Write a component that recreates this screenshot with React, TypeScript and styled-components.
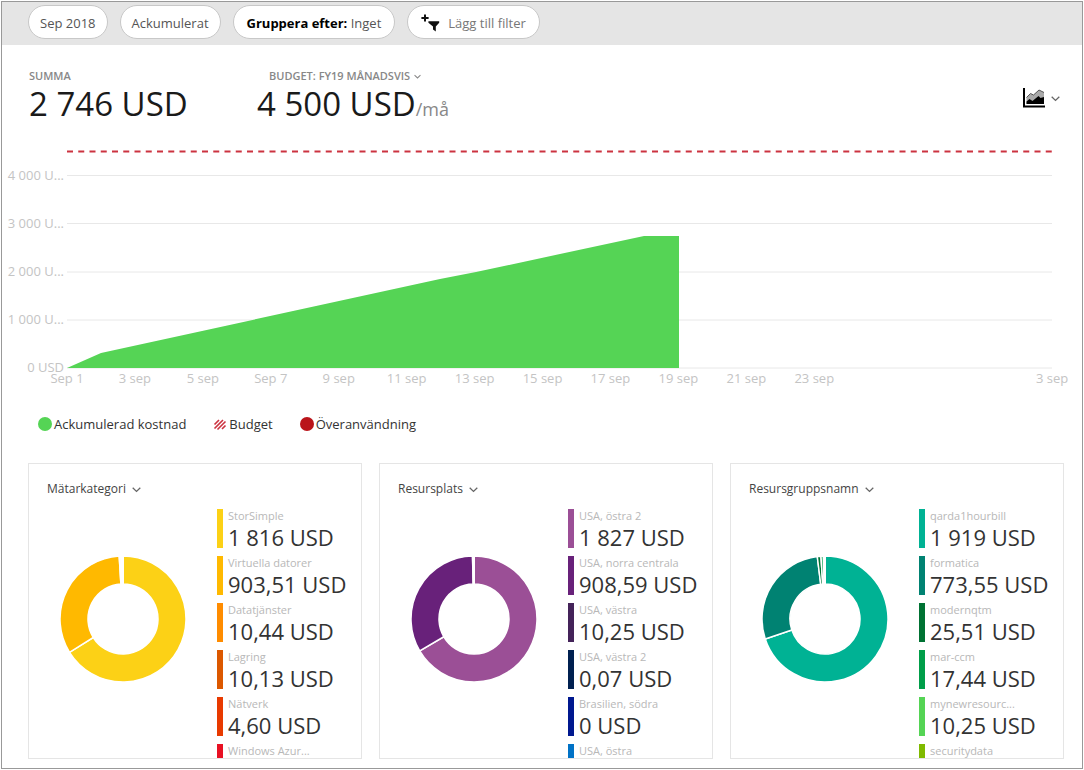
import React from "react";
import styled, { createGlobalStyle } from "styled-components";

const Global = createGlobalStyle`
  *, *::before, *::after { box-sizing: border-box; }
  body { margin: 0; background: #fff; font-family: "Open Sans", "Noto Sans", sans-serif; color: #333; }
  button { font: inherit; color: inherit; cursor: pointer; }
`;

const Page = styled.main`
  margin: 1px;
  border: 1px solid #999;
  padding-bottom: 9px;
`;

const Toolbar = styled.div`
  display: flex;
  gap: 12px;
  height: 43px;
  padding: 3px 26px 0;
  background: #e5e5e5;
`;

const Pill = styled.button<{ $muted?: boolean; $pad?: number }>`
  display: flex;
  align-items: center;
  height: 34px;
  padding: 2px ${(p) => p.$pad ?? 11}px 0;
  border: 1px solid #c8c8c8;
  border-radius: 17px;
  background: #fff;
  font-size: 13px;
  color: ${(p) => (p.$muted ? "#777" : "#555")};
  white-space: pre;
  svg { margin-right: 8px; }
  b { color: #000; }
`;

const Summary = styled.header`
  display: flex;
  height: 105px;
  padding: 24px 22px 0 27px;
`;

const Metric = styled.section`
  width: 228px;
  flex: none;
`;

const MetricLabel = styled.div<{ $indent?: boolean }>`
  display: flex;
  align-items: center;
  gap: 4px;
  padding-left: ${(p) => (p.$indent ? "12px" : "0")};
  font-size: 11px;
  line-height: 14px;
  font-weight: 600;
  color: #888;
`;

const PlainButton = styled.button`
  display: flex;
  align-items: center;
  gap: 4px;
  padding: 0;
  border: 0;
  background: none;
`;

const MetricValue = styled.div`
  font-size: 33px;
  line-height: 41px;
  color: #1a1a1a;
  white-space: nowrap;
  small { font-size: 18px; color: #888; }
`;

const ChartType = styled(PlainButton)`
  gap: 6px;
  height: 24px;
  margin: 17px 0 0 auto;
`;

const Chart = styled.section`
  display: grid;
  grid-template-columns: 62px 1fr;
  column-gap: 3px;
  padding-right: 30px;
`;

const YAxis = styled.div`
  display: grid;
  grid-auto-rows: 48px;
  padding-top: 16px;
  font-size: 13px;
  line-height: 18px;
  text-align: right;
  white-space: nowrap;
  color: #c4c4c4;
  height: 219px;
`;

const Plot = styled.svg`
  display: block;
  width: 100%;
  height: 219px;
`;

const XAxis = styled.div`
  grid-column: 2;
  display: grid;
  grid-template-columns: repeat(29, 1fr) 0;
  font-size: 13px;
  line-height: 18px;
  color: #c4c4c4;
`;

const Tick = styled.span<{ $day: number }>`
  grid-column: ${(p) => p.$day};
  grid-row: 1;
  display: flex;
  justify-content: center;
  width: 0;
  white-space: nowrap;
`;

const Legend = styled.ul`
  display: flex;
  gap: 27px;
  margin: 0;
  padding: 27px 36px 0;
  list-style: none;
  font-size: 13px;
  line-height: 20px;
  li { display: flex; align-items: center; gap: 2px; }
`;

const Cards = styled.div`
  display: grid;
  grid-template-columns: repeat(3, 1fr);
  gap: 17px;
  padding: 29px 18px 0 26px;
`;

const Card = styled.section`
  height: 296px;
  border: 1px solid #e5e5e5;
  overflow: hidden;
  padding: 16px 0 0 18px;
`;

const CardTitle = styled(PlainButton)`
  gap: 6px;
  font-size: 12px;
  line-height: 18px;
  color: #444;
`;

const CardBody = styled.div`
  display: flex;
  justify-content: space-between;
  padding: 11px 11px 0 13px;
`;

const Donut = styled.svg`
  width: 126px;
  height: 126px;
  margin-top: 47px;
  flex: none;
`;

const Items = styled.ul`
  width: 133px;
  margin: 0;
  padding: 0;
  list-style: none;
`;

const Item = styled.li<{ $color: string }>`
  height: 39px;
  margin-bottom: 8px;
  padding-left: 5px;
  border-left: 6px solid ${(p) => p.$color};
  white-space: nowrap;
`;

const ItemName = styled.div`
  font-size: 11px;
  line-height: 14px;
  color: #b8b8b8;
`;

const ItemValue = styled.div`
  font-size: 22px;
  line-height: 28px;
  color: #333;
`;

const Chevron = ({ size = 9, color = "#666" }: { size?: number; color?: string }) => (
  <svg width={size} height={size} viewBox="0 0 9 9" fill="none" stroke={color} strokeWidth="1.3">
    <path d="M0.7 2.8 4.5 6.4 8.3 2.8" />
  </svg>
);

const FilterIcon = () => (
  <svg width="19" height="18" viewBox="0 0 19 18" fill="#111">
    <path d="M3 0.5h2v2.5h2.6v2H5v2.6H3V5H0.4V3H3z" />
    <path d="M7.4 7.2h10.8v1.6l-3.4 3.6v5l-2.8-2v-3L7.4 8.800z" />
  </svg>
);

const AreaIcon = () => (
  <svg width="22" height="20" viewBox="0 0 22 20">
    <path d="M3.5 16V9.5l4-4 3 1.5 5.5-5 5 2.5V16z" fill="#aaa" />
    <path d="M3.5 9.5l4-4 3 1.5 5.5-5 5 2.5" fill="none" stroke="#555" />
    <path d="M3.5 16v-2.5l3-2.5 3 2 6-5 2 2 3.5-1V16z" fill="#000" />
    <path d="M1 0v18.5h21" fill="none" stroke="#000" strokeWidth="2" />
  </svg>
);

type Entry = { name: string; value?: string; amount: number; color: string };

const point = (r: number, share: number) => {
  const a = share * 2 * Math.PI;
  return `${63 + r * Math.sin(a)} ${63 - r * Math.cos(a)}`;
};

const slice = (from: number, to: number) => {
  const large = to - from > 0.5 ? 1 : 0;
  return `M${point(63, from)}A63 63 0 ${large} 1 ${point(63, to)}L${point(35, to)}A35 35 0 ${large} 0 ${point(35, from)}Z`;
};

const cards: { title: string; entries: Entry[] }[] = [
  {
    title: "Mätarkategori",
    entries: [
      { name: "StorSimple", value: "1 816 USD", amount: 1816, color: "#fcd116" },
      { name: "Virtuella datorer", value: "903,51 USD", amount: 903.51, color: "#ffb900" },
      { name: "Datatjänster", value: "10,44 USD", amount: 10.44, color: "#ff8c00" },
      { name: "Lagring", value: "10,13 USD", amount: 10.13, color: "#dc5800" },
      { name: "Nätverk", value: "4,60 USD", amount: 4.6, color: "#e83a00" },
      { name: "Windows Azur...", amount: 1.2, color: "#e81123" },
    ],
  },
  {
    title: "Resursplats",
    entries: [
      { name: "USA, östra 2", value: "1 827 USD", amount: 1827, color: "#9b4f96" },
      { name: "USA, norra centrala", value: "908,59 USD", amount: 908.59, color: "#68217a" },
      { name: "USA, västra", value: "10,25 USD", amount: 10.25, color: "#442359" },
      { name: "USA, västra 2", value: "0,07 USD", amount: 0.07, color: "#002050" },
      { name: "Brasilien, södra", value: "0 USD", amount: 0, color: "#00188f" },
      { name: "USA, östra", amount: 0, color: "#0072c6" },
    ],
  },
  {
    title: "Resursgruppsnamn",
    entries: [
      { name: "qarda1hourbill", value: "1 919 USD", amount: 1919, color: "#00b294" },
      { name: "formatica", value: "773,55 USD", amount: 773.55, color: "#008272" },
      { name: "modernqtm", value: "25,51 USD", amount: 25.51, color: "#007233" },
      { name: "mar-ccm", value: "17,44 USD", amount: 17.44, color: "#009e49" },
      { name: "mynewresourc...", value: "10,25 USD", amount: 10.25, color: "#55d455" },
      { name: "securitydata", amount: 0.5, color: "#7fba00" },
    ],
  },
];

const ticks: [number, string][] = [
  [1, "Sep 1"], [3, "3 sep"], [5, "5 sep"], [7, "Sep 7"], [9, "9 sep"], [11, "11 sep"],
  [13, "13 sep"], [15, "15 sep"], [17, "17 sep"], [19, "19 sep"], [21, "21 sep"], [23, "23 sep"], [30, "3 sep"],
];

const DonutChart = ({ entries }: { entries: Entry[] }) => {
  const total = entries.reduce((s, e) => s + e.amount, 0);
  let at = 0;
  return (
    <Donut viewBox="0 0 126 126">
      {entries.map((e) => {
        const from = at;
        at += e.amount / total;
        return e.amount > 0 ? (
          <path key={e.name} d={slice(from, at)} fill={e.color} stroke="#fff" strokeWidth="1.5" />
        ) : null;
      })}
      <path d="M63 0V28" stroke="#fff" strokeWidth="2" />
    </Donut>
  );
};

export default function App() {
  return (
    <>
      <Global />
      <Page>
        <Toolbar>
          <Pill>Sep 2018</Pill>
          <Pill>Ackumulerat</Pill>
          <Pill $pad={13}><b>Gruppera efter:</b> Inget</Pill>
          <Pill $pad={13} $muted><FilterIcon />Lägg till filter</Pill>
        </Toolbar>
        <Summary>
          <Metric>
            <MetricLabel>SUMMA</MetricLabel>
            <MetricValue>2 746 USD</MetricValue>
          </Metric>
          <Metric>
            <MetricLabel $indent>
              <PlainButton>BUDGET: FY19 MÅNADSVIS <Chevron size={7} color="#888" /></PlainButton>
            </MetricLabel>
            <MetricValue>4 500 USD<small>/må</small></MetricValue>
          </Metric>
          <ChartType aria-label="Diagramtyp"><AreaIcon /><Chevron /></ChartType>
        </Summary>
        <Chart>
          <YAxis>
            <span>4 000 U...</span>
            <span>3 000 U...</span>
            <span>2 000 U...</span>
            <span>1 000 U...</span>
            <span>0 USD</span>
          </YAxis>
          <Plot viewBox="0 0 985 219" preserveAspectRatio="none">
            <path d="M0 25.5H985M0 73.5H985M0 122H985M0 170H985M0 218H985" stroke="#e8e8e8" vectorEffect="non-scaling-stroke" />
            <path d="M0 218 34 203 373 129 409 122 577 86H612V218Z" fill="#55d455" />
            <path d="M0 1.5H985" stroke="#cc3340" strokeWidth="2" strokeDasharray="6 5.25" vectorEffect="non-scaling-stroke" />
          </Plot>
          <XAxis>
            {ticks.map(([day, label]) => <Tick key={day} $day={day}>{label}</Tick>)}
          </XAxis>
        </Chart>
        <Legend>
          <li><svg width="14" height="14"><circle cx="7" cy="7" r="7" fill="#55d455" /></svg>Ackumulerad kostnad</li>
          <li>
            <svg width="14" height="14" stroke="#cc3340" strokeWidth="1.6"><path d="M1.500 7.500 6 3M1.500 11.500 10 3M4.500 12.500 12.500 4.500M9 12 12.500 8.500" /></svg>
            Budget
          </li>
          <li><svg width="14" height="14"><circle cx="7" cy="7" r="7" fill="#ba141a" /></svg>Överanvändning</li>
        </Legend>
        <Cards>
          {cards.map((card) => (
            <Card key={card.title}>
              <CardTitle>{card.title}<Chevron /></CardTitle>
              <CardBody>
                <DonutChart entries={card.entries} />
                <Items>
                  {card.entries.map((e) => (
                    <Item key={e.name} $color={e.color}>
                      <ItemName>{e.name}</ItemName>
                      {e.value && <ItemValue>{e.value}</ItemValue>}
                    </Item>
                  ))}
                </Items>
              </CardBody>
            </Card>
          ))}
        </Cards>
      </Page>
    </>
  );
}
